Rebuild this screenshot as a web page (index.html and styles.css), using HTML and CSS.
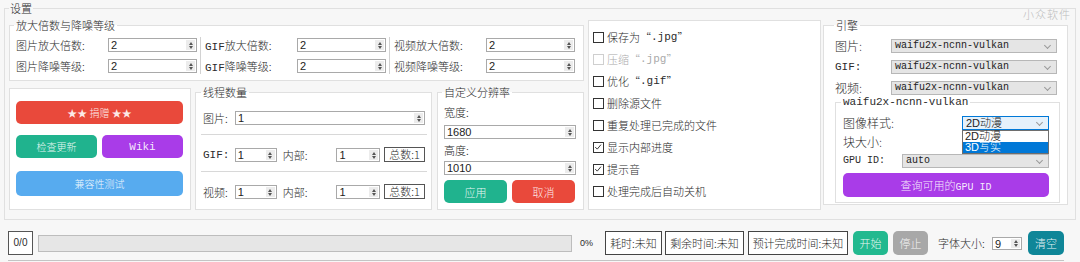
FILE: index.html
```html
<!DOCTYPE html>
<html lang="zh-CN">
<head>
    <meta charset="UTF-8">
    <meta name="viewport" content="width=device-width, initial-scale=1.0">
    <title>设置</title>
    <link rel="stylesheet" href="styles.css">
</head>
<body>
    <div class="watermark">小众软件</div>

    <fieldset class="settings">
        <legend>设置</legend>
        <div class="settings-body">
            <div class="left-col">
                <fieldset class="group scale-group">
                    <legend>放大倍数与降噪等级</legend>
                    <div class="scale-body">
                        <div class="scale-col">
                            <span>图片放大倍数:</span>
                            <div class="spin"><span class="val">2</span><span class="arrows"></span></div>
                            <span>图片降噪等级:</span>
                            <div class="spin"><span class="val">2</span><span class="arrows"></span></div>
                        </div>
                        <div class="vsep"></div>
                        <div class="scale-col">
                            <span><span class="mono">GIF</span>放大倍数:</span>
                            <div class="spin"><span class="val">2</span><span class="arrows"></span></div>
                            <span><span class="mono">GIF</span>降噪等级:</span>
                            <div class="spin"><span class="val">2</span><span class="arrows"></span></div>
                        </div>
                        <div class="vsep"></div>
                        <div class="scale-col">
                            <span>视频放大倍数:</span>
                            <div class="spin"><span class="val">2</span><span class="arrows"></span></div>
                            <span>视频降噪等级:</span>
                            <div class="spin"><span class="val">2</span><span class="arrows"></span></div>
                        </div>
                    </div>
                </fieldset>

                <div class="lower-row">
                    <div class="panel donate-panel">
                        <button class="btn btn-red btn-donate">★★ 捐赠 ★★</button>
                        <div class="btn-pair">
                            <button class="btn btn-green">检查更新</button>
                            <button class="btn btn-purple btn-wiki">Wiki</button>
                        </div>
                        <button class="btn btn-blue btn-compat">兼容性测试</button>
                    </div>

                    <fieldset class="group thread-group">
                        <legend>线程数量</legend>
                        <div class="thread-row">
                            <span class="t-label">图片:</span>
                            <div class="spin spin-fill"><span class="val">1</span><span class="arrows"></span></div>
                        </div>
                        <div class="hsep"></div>
                        <div class="thread-row">
                            <span class="t-label mono">GIF:</span>
                            <div class="spin spin-s"><span class="val">1</span><span class="arrows"></span></div>
                            <span class="inner-label">内部:</span>
                            <div class="spin spin-m"><span class="val">1</span><span class="arrows"></span></div>
                            <span class="total">总数:1</span>
                        </div>
                        <div class="hsep"></div>
                        <div class="thread-row">
                            <span class="t-label">视频:</span>
                            <div class="spin spin-s"><span class="val">1</span><span class="arrows"></span></div>
                            <span class="inner-label">内部:</span>
                            <div class="spin spin-m"><span class="val">1</span><span class="arrows"></span></div>
                            <span class="total">总数:1</span>
                        </div>
                    </fieldset>

                    <fieldset class="group res-group">
                        <legend>自定义分辨率</legend>
                        <div class="res-label">宽度:</div>
                        <div class="spin res-spin"><span class="val">1680</span><span class="arrows"></span></div>
                        <div class="res-label res-label-2">高度:</div>
                        <div class="spin res-spin"><span class="val">1010</span><span class="arrows"></span></div>
                        <div class="res-btns">
                            <button class="btn btn-green">应用</button>
                            <button class="btn btn-red">取消</button>
                        </div>
                    </fieldset>
                </div>
            </div>

            <div class="panel checks-panel">
                <div class="check"><span class="box"></span>保存为“<span class="mono">.jpg</span>”</div>
                <div class="check disabled"><span class="box"></span>压缩“<span class="mono">.jpg</span>”</div>
                <div class="check"><span class="box"></span>优化“<span class="mono">.gif</span>”</div>
                <div class="check"><span class="box"></span>删除源文件</div>
                <div class="check"><span class="box"></span>重复处理已完成的文件</div>
                <div class="check"><span class="box"><svg viewBox="0 0 11 11" width="9" height="9"><polyline points="1.5,5 4,7.5 8.5,2" fill="none" stroke="#333" stroke-width="1.2"/></svg></span>显示内部进度</div>
                <div class="check"><span class="box"><svg viewBox="0 0 11 11" width="9" height="9"><polyline points="1.5,5 4,7.5 8.5,2" fill="none" stroke="#333" stroke-width="1.2"/></svg></span>提示音</div>
                <div class="check"><span class="box"></span>处理完成后自动关机</div>
            </div>

            <fieldset class="group engine-group">
                <legend>引擎</legend>
                <div class="engine-row">
                    <span class="e-label">图片:</span>
                    <div class="select mono">waifu2x-ncnn-vulkan</div>
                </div>
                <div class="engine-row">
                    <span class="e-label mono">GIF:</span>
                    <div class="select mono">waifu2x-ncnn-vulkan</div>
                </div>
                <div class="engine-row">
                    <span class="e-label">视频:</span>
                    <div class="select mono">waifu2x-ncnn-vulkan</div>
                </div>

                <fieldset class="group sub-group">
                    <legend class="mono">waifu2x-ncnn-vulkan</legend>
                    <div class="sub-row">
                        <span class="style-label">图像样式:</span>
                        <div class="select select-open">2D动漫
                            <div class="dropdown">
                                <div class="opt">2D动漫</div>
                                <div class="opt opt-active">3D写实</div>
                            </div>
                        </div>
                    </div>
                    <div class="sub-row">
                        <span>块大小:</span>
                    </div>
                    <div class="sub-row">
                        <span class="gpu-label mono">GPU ID:</span>
                        <div class="select mono gpu-select">auto</div>
                    </div>
                    <button class="btn btn-purple btn-gpu">查询可用的<span class="mono">GPU ID</span></button>
                </fieldset>
            </fieldset>
        </div>
    </fieldset>

    <div class="status-bar">
        <span class="count-box">0/0</span>
        <div class="progress"></div>
        <span class="percent">0%</span>
        <span class="info-box info-used">耗时:未知</span>
        <span class="info-box info-left">剩余时间:未知</span>
        <span class="info-box info-eta">预计完成时间:未知</span>
        <button class="btn btn-start">开始</button>
        <button class="btn btn-stop">停止</button>
        <span class="font-label">字体大小:</span>
        <div class="spin font-spin"><span class="val">9</span><span class="arrows"></span></div>
        <button class="btn btn-clear">清空</button>
    </div>
</body>
</html>
```

FILE: styles.css
```css
* {
    box-sizing: border-box;
}

body {
    margin: 0;
    width: 1080px;
    height: 262px;
    overflow: hidden;
    position: relative;
    background-color: #f7f7f7;
    font-family: "Noto Sans CJK SC", sans-serif;
    font-weight: 300;
    font-size: 11px;
    color: #2b2b2b;
}

.mono {
    font-family: "Liberation Mono", "Noto Sans CJK SC", monospace;
    font-weight: normal;
}

.watermark {
    position: absolute;
    top: 6px;
    right: 9px;
    font-size: 11px;
    color: #bdbdbd;
    letter-spacing: 1px;
}

fieldset {
    margin: 0;
    padding: 0;
    min-width: 0;
    border: 1px solid #e0e0e0;
}

legend {
    margin-left: -2px;
    padding: 0 2px;
    line-height: 14px;
    font-size: 11px;
    color: #2b2b2b;
}

.settings {
    width: 1072px;
    height: 219px;
    margin: 1px 0 0 4px;
    padding: 3px 7px 0 4px;
}

.settings > legend {
    margin-left: 0;
    padding: 0 1px;
}

.settings-body {
    display: flex;
    align-items: flex-start;
}

.left-col {
    width: 575px;
}

.group, .panel {
    background-color: #fff;
}

.panel {
    border: 1px solid #e0e0e0;
}

/* spin boxes and combo boxes */

.spin {
    display: flex;
    height: 14px;
    border: 1px solid #a9a9a9;
    background-color: #fff;
    font-family: "Liberation Sans", sans-serif;
    font-weight: normal;
    font-size: 11px;
    line-height: 12px;
    color: #222;
}

.spin .val {
    flex: 1;
    padding-left: 2px;
    overflow: hidden;
}

.spin .arrows {
    width: 9px;
    margin: 1px 1px 1px 0;
    background-color: #ececec;
    display: flex;
    flex-direction: column;
    align-items: center;
    justify-content: center;
    gap: 1px;
}

.spin .arrows::before,
.spin .arrows::after {
    content: "";
    border-left: 2px solid transparent;
    border-right: 2px solid transparent;
}

.spin .arrows::before {
    border-bottom: 3px solid #555;
}

.spin .arrows::after {
    border-top: 3px solid #555;
}

.select {
    position: relative;
    display: flex;
    align-items: center;
    height: 14px;
    padding-left: 3px;
    border: 1px solid #b7b7b7;
    background-color: #e5e5e5;
    font-size: 10px;
    line-height: 12px;
    color: #222;
}

.select::after {
    content: "";
    margin-left: auto;
    margin-right: 6px;
    width: 4px;
    height: 4px;
    border-right: 1px solid #9a9a9a;
    border-bottom: 1px solid #9a9a9a;
    transform: translateY(-1px) rotate(45deg);
}

/* buttons */

.btn {
    display: block;
    padding: 0;
    border: none;
    border-radius: 5px;
    font-family: inherit;
    font-weight: 300;
    font-size: 11px;
    color: rgba(255, 255, 255, 0.9);
    cursor: pointer;
}

.btn-red {
    background-color: #e9493b;
}

.btn-green {
    background-color: #20b38e;
}

.btn-purple {
    background-color: #a93ce8;
}

.btn-blue {
    background-color: #57abef;
}

/* scale group */

.scale-group {
    height: 63px;
    padding: 6px 0 0 6px;
}

.scale-body {
    display: flex;
}

.scale-col {
    display: grid;
    grid-template-columns: 92px 89px;
    grid-auto-rows: 14px;
    row-gap: 7px;
    line-height: 14px;
}

.vsep {
    width: 1px;
    margin: -1px 4px -1px 3px;
    background-color: #d2d2d2;
}

/* lower row */

.lower-row {
    display: flex;
    align-items: flex-start;
    margin-top: 4px;
}

.donate-panel {
    width: 182px;
    height: 122px;
    margin-top: 3px;
    padding: 12px 7px 0 6px;
}

.donate-panel .btn {
    font-size: 10px;
}

.btn-donate {
    width: 100%;
    height: 23px;
}

.btn-pair {
    display: flex;
    gap: 5px;
    margin-top: 11px;
}

.btn-pair .btn {
    width: 81px;
    height: 23px;
}

.donate-panel .btn-wiki {
    font-family: "Liberation Mono", monospace;
    font-weight: normal;
    font-size: 11px;
}

.btn-compat {
    width: 100%;
    height: 25px;
    margin-top: 13px;
}

.thread-group {
    width: 237px;
    height: 125px;
    margin-left: 4px;
    padding: 12px 6px 0 7px;
}

.thread-row {
    display: flex;
    height: 14px;
    line-height: 14px;
}

.t-label {
    width: 32px;
}

.spin-fill {
    flex: 1;
}

.spin-s {
    width: 42px;
}

.inner-label {
    width: 54px;
    margin-left: 6px;
}

.spin-m {
    width: 44px;
}

.total {
    width: 41px;
    height: 15px;
    margin: -1px 0 0 4px;
    border: 1px solid #555;
    text-align: center;
    line-height: 13px;
}

.hsep {
    height: 1px;
    margin: 9px -2px 13px -2px;
    background-color: #d8d8d8;
}

.res-group {
    width: 147px;
    height: 125px;
    margin-left: 5px;
    padding: 6px 7px 0 6px;
}

.res-label {
    line-height: 14px;
}

.res-spin {
    margin-top: 6px;
}

.res-label-2 {
    margin-top: 4px;
}

.res-label-2 + .res-spin {
    margin-top: 4px;
}

.res-btns {
    display: flex;
    gap: 5px;
    margin-top: 5px;
}

.res-btns .btn {
    width: 63px;
    height: 23px;
}

/* check boxes */

.checks-panel {
    width: 233px;
    height: 190px;
    margin: 2px 0 0 4px;
    padding: 5px 0 0 4px;
}

.check {
    display: flex;
    align-items: center;
    height: 22px;
    font-size: 11px;
}

.check .box {
    display: flex;
    align-items: center;
    justify-content: center;
    width: 11px;
    height: 11px;
    margin-right: 3px;
    border: 1px solid #333;
    background-color: #fff;
}

.check.disabled {
    color: #aaa;
}

.check.disabled .box {
    border-color: #cfcfcf;
}

/* engine */

.engine-group {
    width: 245px;
    height: 187px;
    margin-left: 2px;
    padding: 7px 10px 0 11px;
}

.engine-group > legend {
    margin-left: -1px;
}

.engine-row {
    display: flex;
    height: 14px;
    margin-bottom: 7px;
    line-height: 14px;
    font-size: 12px;
}

.e-label {
    width: 56px;
}

.e-label.mono {
    font-size: 11px;
}

.engine-row .select {
    flex: 1;
}

.sub-group {
    margin: -7px -3px 0 0;
    padding: 7px 10px 5px 7px;
}

.sub-row {
    display: flex;
    height: 14px;
    margin-bottom: 5px;
    line-height: 14px;
    font-size: 12px;
}

.style-label {
    width: 119px;
}

.select-open {
    width: 87px;
    border-color: #0078d7;
    background-color: #e5f1fb;
    font-family: "Liberation Sans", "Noto Sans CJK SC", sans-serif;
    font-size: 11px;
}

.dropdown {
    position: absolute;
    top: 13px;
    left: -1px;
    right: -1px;
    z-index: 2;
    border: 1px solid #6e6e6e;
    background-color: #fff;
}

.opt {
    height: 11px;
    padding-left: 2px;
    line-height: 11px;
    font-size: 11px;
    color: #222;
}

.opt-active {
    background-color: #0078d7;
    color: #fff;
}

.gpu-label {
    width: 59px;
    font-size: 10px;
}

.gpu-select {
    flex: 1;
}

.btn-gpu {
    width: 100%;
    height: 24px;
}

.btn-gpu .mono {
    font-size: 10px;
}

/* status bar */

.status-bar {
    display: flex;
    align-items: center;
    width: 1056px;
    height: 41px;
    margin-left: 8px;
    padding-top: 6px;
    border-bottom: 1px solid #c4c4c4;
}

.count-box {
    width: 25px;
    height: 24px;
    border: 1px solid #555;
    background-color: #fff;
    font-family: "Liberation Sans", sans-serif;
    font-weight: normal;
    font-size: 10px;
    line-height: 22px;
    text-align: center;
}

.progress {
    width: 534px;
    height: 17px;
    margin-left: 5px;
    border: 1px solid #bdbdbd;
    background-color: #e6e6e6;
}

.percent {
    width: 25px;
    margin-left: 8px;
    font-family: "Liberation Sans", sans-serif;
    font-weight: normal;
    font-size: 9px;
}

.info-box {
    height: 24px;
    border: 1px solid #444;
    background-color: #fff;
    font-size: 11px;
    line-height: 22px;
    text-align: center;
}

.info-used {
    width: 57px;
}

.info-left {
    width: 79px;
    margin-left: 3px;
}

.info-eta {
    width: 100px;
    margin-left: 4px;
}

.status-bar .btn {
    width: 35px;
    height: 24px;
    margin-left: 5px;
    font-size: 11px;
}

.btn-start {
    background-color: #22b98f;
}

.btn-stop {
    background-color: #a8a8a8;
}

.font-label {
    width: 54px;
    margin-left: 10px;
}

.font-spin {
    width: 30px;
    height: 13px;
}

.status-bar .btn-clear {
    width: 36px;
    margin-left: 6px;
    background-color: #0f8698;
}
```
